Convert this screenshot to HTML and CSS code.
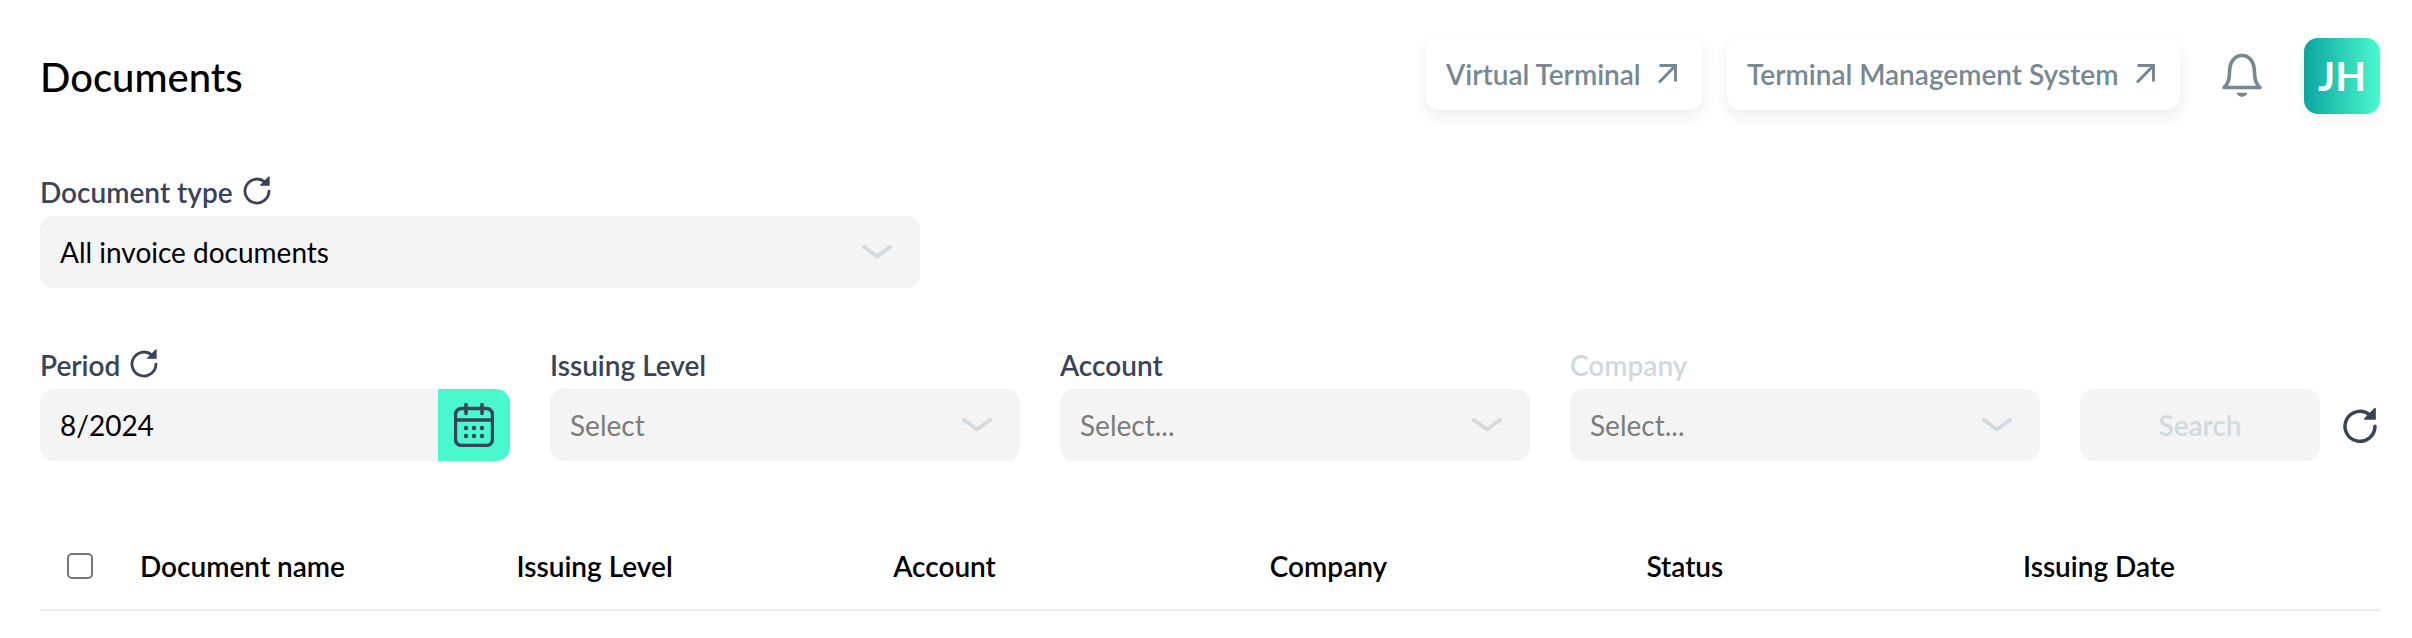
FILE: index.html
```html
<!DOCTYPE html>
<html lang="en">
<head>
<meta charset="utf-8">
<title>Documents</title>
<link rel="stylesheet" href="styles.css">
</head>
<body>
<svg class="sprite" width="0" height="0" aria-hidden="true">
  <symbol id="refresh" viewBox="0 0 24 24">
    <path d="M21 12.800a9 9 0 1 1-3.200-6.900" fill="none" stroke="currentColor" stroke-width="2.100" stroke-linecap="round"/>
    <path d="M21 2.200v6.200h-6.200z" fill="currentColor" stroke="currentColor" stroke-width="1" stroke-linejoin="round"/>
  </symbol>
  <symbol id="chev" viewBox="0 0 30 14">
    <path d="M2 2l13 9.500L28 2" fill="none" stroke="currentColor" stroke-width="4" stroke-linecap="round" stroke-linejoin="round"/>
  </symbol>
  <symbol id="ext" viewBox="0 0 22 22">
    <path d="M3.500 2.500h16v16M19 3L3 19.500" fill="none" stroke="currentColor" stroke-width="3"/>
  </symbol>
</svg>
<main class="page">
  <header class="topbar">
    <h1 class="title">Documents</h1>
    <div class="actions">
      <a class="link-btn link-vt">Virtual Terminal <svg class="ext"><use href="#ext"/></svg></a>
      <a class="link-btn link-tms">Terminal Management System <svg class="ext"><use href="#ext"/></svg></a>
      <svg class="bell" viewBox="0 0 40 46">
        <path d="M2 34.500c4.500-3.500 5.500-8 5.500-15C7.500 9 12.500 2.500 20 2.500S32.500 9 32.500 19.500c0 7 1 11.500 5.500 15z" fill="none" stroke="currentColor" stroke-width="3.600" stroke-linejoin="round"/>
        <path d="M15.500 40.500c2.500 3.500 6.500 3.500 9 0z" fill="currentColor" stroke="currentColor" stroke-width="1.500" stroke-linejoin="round"/>
      </svg>
      <div class="avatar">JH</div>
    </div>
  </header>

  <section class="doc-type">
    <div class="label">Document type <svg class="ref-sm"><use href="#refresh"/></svg></div>
    <div class="select"><span class="value">All invoice documents</span><svg class="chev"><use href="#chev"/></svg></div>
  </section>

  <section class="filters">
    <div class="field">
      <div class="label">Period <svg class="ref-sm"><use href="#refresh"/></svg></div>
      <div class="select period"><span class="value">8/2024</span>
        <div class="cal-btn">
          <svg class="cal" viewBox="0 0 40 44">
            <rect x="1.500" y="5.500" width="37" height="37" rx="6" fill="none" stroke="currentColor" stroke-width="3.400"/>
            <path d="M1.500 17h37M12 1.500v9M28 1.500v9" fill="none" stroke="currentColor" stroke-width="3.600" stroke-linecap="round"/>
            <g fill="currentColor"><circle cx="12" cy="25" r="2.200"/><circle cx="20" cy="25" r="2.200"/><circle cx="28" cy="25" r="2.200"/><circle cx="12" cy="33" r="2.200"/><circle cx="20" cy="33" r="2.200"/><circle cx="28" cy="33" r="2.200"/></g>
          </svg>
        </div>
      </div>
    </div>
    <div class="field">
      <div class="label">Issuing Level</div>
      <div class="select"><span class="placeholder">Select</span><svg class="chev"><use href="#chev"/></svg></div>
    </div>
    <div class="field">
      <div class="label">Account</div>
      <div class="select"><span class="placeholder">Select...</span><svg class="chev"><use href="#chev"/></svg></div>
    </div>
    <div class="field">
      <div class="label label-off">Company</div>
      <div class="select"><span class="placeholder">Select...</span><svg class="chev"><use href="#chev"/></svg></div>
    </div>
    <div class="search-group">
      <div class="search">Search</div>
      <svg class="ref-lg"><use href="#refresh"/></svg>
    </div>
  </section>

  <section class="thead">
    <div class="th-check"><span class="checkbox"></span></div>
    <div>Document name</div>
    <div>Issuing Level</div>
    <div>Account</div>
    <div>Company</div>
    <div>Status</div>
    <div>Issuing Date</div>
  </section>
</main>
</body>
</html>
```
FILE: styles.css
```css
* { box-sizing: border-box; }
html, body { margin: 0; padding: 0; background: #fff; }
body { font-family: Lato, "Open Sans", sans-serif; color: #000; overflow: hidden; }
.sprite { position: absolute; }
.page { width: 2412px; height: 638px; padding: 38px 32px 0 40px; }

.topbar { display: flex; justify-content: space-between; align-items: center; height: 76px; }
.title { margin: 0; font-size: 40px; font-weight: 500; line-height: 1; padding-top: 2px; }
.actions { display: flex; align-items: center; height: 76px; }
.link-btn { display: flex; align-items: center; justify-content: space-between; height: 72px; margin-bottom: 4px; padding: 0 24px 0 20px; border-radius: 14px; background: #fff; box-shadow: 0 6px 16px rgba(0,0,0,.08); color: #768894; font-size: 28px; font-weight: 600; }
.link-vt { width: 276px; margin-right: 25px; }
.link-tms { width: 453px; }
.ext { width: 22px; height: 22px; color: #768894; }
.bell { width: 40px; height: 46px; margin-left: 42px; color: #768894; }
.avatar { width: 76px; height: 76px; margin-left: 42px; border-radius: 14px; background: linear-gradient(90deg, #0ba69f, #4af8cd); box-shadow: 0 4px 14px rgba(0,0,0,.06); color: #fff; font-size: 40px; font-weight: 700; display: flex; align-items: center; justify-content: center; }

.doc-type { width: 880px; margin-top: 60px; }
.label { display: flex; align-items: center; gap: 8px; height: 36px; margin-bottom: 6px; font-size: 28px; font-weight: 600; color: #3a4358; white-space: nowrap; }
.label-off { color: #d0d9de; }
.ref-sm { width: 32px; height: 32px; color: #3a4358; margin-top: -4px; }
.ref-lg { width: 40px; height: 40px; color: #3a4358; }

.select { display: flex; align-items: center; justify-content: space-between; height: 72px; padding: 0 28px 0 20px; border-radius: 14px; background: #f4f4f4; font-size: 28px; }
.value { color: #000; }
.placeholder { color: #7b7b7b; }
.chev { width: 30px; height: 14px; color: #d3dadf; }

.filters { display: grid; grid-template-columns: repeat(4, 470px) 1fr; column-gap: 40px; margin-top: 59px; }
.period { padding-right: 0; overflow: hidden; }
.cal-btn { width: 72px; height: 72px; background: #4af8cd; display: flex; align-items: center; justify-content: center; }
.cal { width: 40px; height: 44px; color: #3a4358; }

.search-group { display: flex; align-items: center; align-self: end; height: 72px; gap: 20px; }
.search { width: 240px; height: 72px; border-radius: 14px; background: #f4f4f4; color: #d0d9de; font-size: 28px; font-weight: 600; display: flex; align-items: center; justify-content: center; }

.thead { display: grid; grid-template-columns: 100px repeat(5, 376.6px) 1fr; align-items: center; height: 87px; margin-top: 63px; padding-bottom: 2px; border-bottom: 2px solid #e9ebed; font-size: 28px; font-weight: 600; }
.th-check { padding-left: 27px; display: flex; }
.checkbox { width: 26px; height: 26px; border: 2px solid #767676; border-radius: 5px; background: #fff; }
```
